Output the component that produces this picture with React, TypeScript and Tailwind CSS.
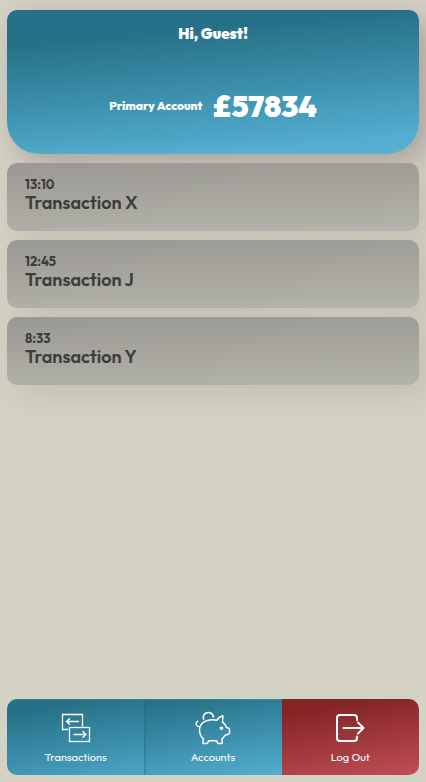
import React from "react";

type Transaction = { time: string; name: string };

const transactions: Transaction[] = [
  { time: "13:10", name: "Transaction X" },
  { time: "12:45", name: "Transaction J" },
  { time: "8:33", name: "Transaction Y" },
];

function TransferIcon() {
  return (
    <svg className="h-9 w-9" viewBox="0 0 36 36" fill="none" stroke="currentColor" strokeWidth="1.3" aria-hidden="true">
      <path d="M10 19.5H4.5V4.500h20v12" />
      <rect x="11.500" y="17.500" width="20" height="14" />
      <path d="M21 11.500H8.500M12 8.200L8.500 11.500l3.500 3.300M15.500 24.500H28M24.500 21.200l3.500 3.300-3.500 3.300" />
    </svg>
  );
}

function PiggyIcon() {
  return (
    <svg
      className="h-9 w-9"
      viewBox="0 0 36 36"
      fill="none"
      stroke="currentColor"
      strokeWidth="1.5"
      strokeLinejoin="round"
      strokeLinecap="round"
      aria-hidden="true"
    >
      <path d="M22 10.200c-9-2-17.500 2-17.500 10 0 4 1.500 6.500 4 8.800l-.7 3.200c-.1.800.3 1.300 1 1.300h2.700c.8 0 1.200-.4 1.500-1.100l.6-1.600h8l.6 1.600c.3.700.7 1.100 1.500 1.100h2.600c.8 0 1.100-.5 1-1.200l-.4-3.300c1.500-1.200 2.400-2.300 3.100-3.800l3.300-1c.8-.3 1.200-.7 1.200-1.400v-3.600c0-.8-.4-1.200-1.200-1.300l-1.800-.4c-.8-2.200-2.200-4-4-5.300l.4-6.400c-2.500.600-4.700 2-5.900 4.400z" />
      <path d="M8.600 9.200C7.500 5.500 9.800 2.500 13.200 2.500c2.600 0 4.600 1.600 5.300 4.500M4.500 16.800C1.200 16.800.2 13.500 2.500 11.300" />
      <circle cx="26.500" cy="18.300" r="1" fill="currentColor" />
    </svg>
  );
}

function LogOutIcon() {
  return (
    <svg
      className="h-9 w-9"
      viewBox="0 0 36 36"
      fill="none"
      stroke="currentColor"
      strokeWidth="2"
      strokeLinecap="round"
      strokeLinejoin="round"
      aria-hidden="true"
    >
      <path d="M25 10V8a3 3 0 0 0-3-3H8a3 3 0 0 0-3 3v20a3 3 0 0 0 3 3h14a3 3 0 0 0 3-3v-1.500" />
      <path d="M11.500 18H31.500M26 12.500L31.500 18l-5.500 5.500" />
    </svg>
  );
}

export default function App() {
  return (
    <div className="flex min-h-screen flex-col overflow-hidden bg-[#d4d1c5] px-[7px] pt-2.5 pb-[7px] font-['Outfit',Lato,sans-serif] text-white">
      <header className="flex h-36 flex-col items-center rounded-t-[10px] rounded-b-[32px] bg-linear-[175deg,#267187_20%,#53aed1_90%] pt-3 shadow-[10px_10px_30px_#a5a09a]">
        <h1 className="text-[15px] leading-6 font-black">Hi, Guest!</h1>
        <div className="mt-10 flex items-center gap-2.5">
          <h2 className="text-xs leading-5 font-extrabold">Primary Account</h2>
          <p className="text-[30px] leading-10 font-black">£57834</p>
        </div>
      </header>

      <main className="mt-[9px] mb-6">
        <ul className="flex flex-col gap-[9px]">
          {transactions.map((item) => (
            <li
              key={item.name}
              className="h-[68px] rounded-[10px] bg-linear-[178deg,#9a9892,#b4b3ab] px-[18px] pt-3 text-[#3c3c3c] shadow-[10px_10px_30px_#c3c0b2]"
            >
              <p className="text-[13px] leading-[18px] font-bold">{item.time}</p>
              <h3 className="text-lg leading-5 font-semibold">{item.name}</h3>
            </li>
          ))}
        </ul>
      </main>

      <nav className="mt-auto grid h-[76px] grid-cols-3 overflow-hidden rounded-[10px] text-[11px] leading-4">
        <button type="button" className="flex flex-col items-center border-t border-[#20657a]/50 bg-linear-[170deg,#267187_15%,#4ca5c6] pt-[10px]">
          <TransferIcon />
          <span className="mt-[3px]">Transactions</span>
        </button>
        <button type="button" className="flex flex-col items-center border-t border-[#20657a]/50 bg-linear-[170deg,#267187_5%,#53aed1] pt-[10px] shadow-[inset_2px_0_0_#20657a55]">
          <PiggyIcon />
          <span className="mt-[3px]">Accounts</span>
        </button>
        <button type="button" className="flex flex-col items-center border-t border-[#70282d] bg-linear-[170deg,#862426_15%,#be4f55] pt-[10px]">
          <LogOutIcon />
          <span className="mt-[3px]">Log Out</span>
        </button>
      </nav>
    </div>
  );
}
